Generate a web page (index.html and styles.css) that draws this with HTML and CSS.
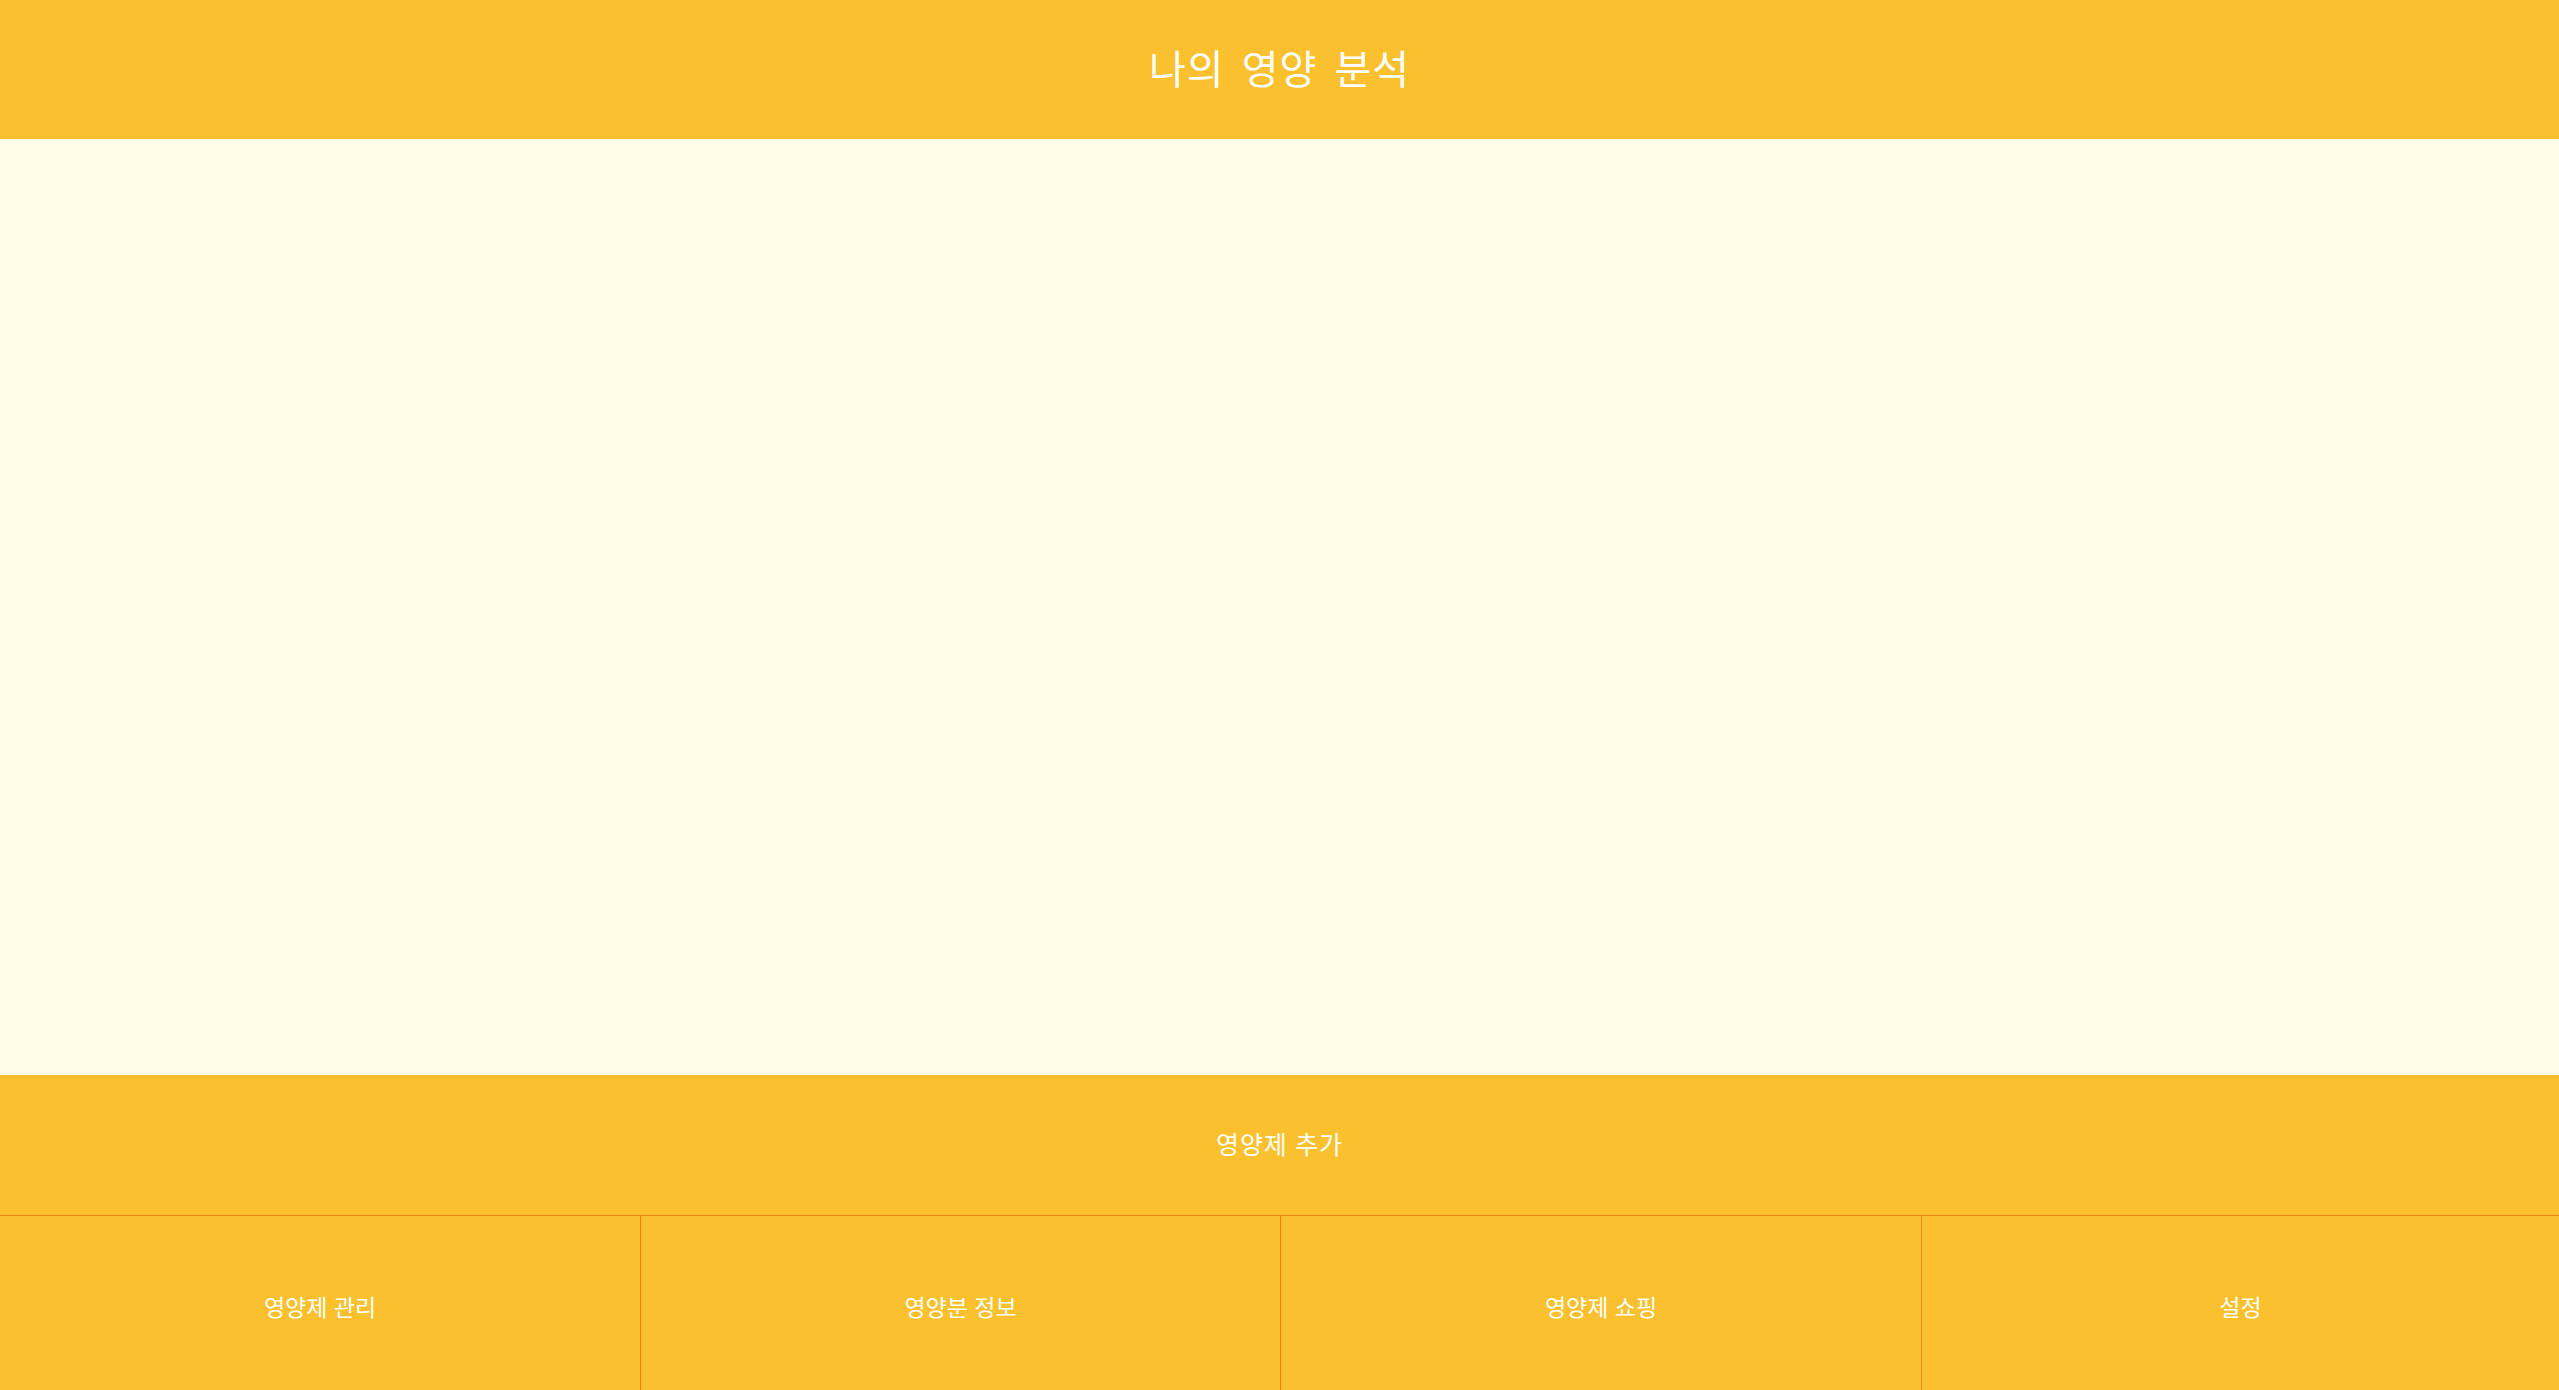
FILE: index.html
```html
<!DOCTYPE html>
<html lang="ko">
<head>
<meta charset="utf-8">
<title>나의 영양 분석</title>
<link rel="stylesheet" href="styles.css">
</head>
<body>
<div class="app">
  <header class="topbar"><h1 class="title">나의 영양 분석</h1></header>
  <main class="content"></main>
  <button class="add-btn" type="button">영양제 추가</button>
  <nav class="tabbar">
    <a class="tab">영양제 관리</a>
    <a class="tab">영양분 정보</a>
    <a class="tab">영양제 쇼핑</a>
    <a class="tab">설정</a>
  </nav>
</div>
</body>
</html>
```
FILE: styles.css
```css
html, body {
  margin: 0;
  padding: 0;
  height: 100%;
  overflow: hidden;
}
body {
  font-family: "Noto Sans CJK KR", "Noto Sans", sans-serif;
  color: #fff;
}
.app {
  display: flex;
  flex-direction: column;
  height: 100vh;
}
.topbar {
  height: 139px;
  flex: 0 0 139px;
  box-sizing: border-box;
  padding-bottom: 6px;
  background: #fbc02d;
  display: flex;
  align-items: center;
  justify-content: center;
}
.title {
  margin: 0;
  font-size: 40px;
  font-weight: 400;
  letter-spacing: 1px;
  word-spacing: 5px;
}
.content {
  flex: 1 1 auto;
  background: #fffde7;
}
.add-btn {
  flex: 0 0 140px;
  height: 140px;
  box-sizing: border-box;
  border: 0;
  margin: 0;
  padding: 0 0 5px 0;
  background: #fbc02d;
  color: #fff;
  font-family: inherit;
  font-size: 25px;
  letter-spacing: 0.8px;
  display: flex;
  align-items: center;
  justify-content: center;
}
.tabbar {
  flex: 0 0 175px;
  display: grid;
  grid-template-columns: 640px 640px 641px 1fr;
  border-top: 1px solid #f57f17;
  background: #fbc02d;
  box-sizing: border-box;
}
.tab {
  display: flex;
  align-items: center;
  justify-content: center;
  padding-top: 6px;
  font-size: 23px;
  color: #fff;
  border-left: 1px solid #f57f17;
}
.tab:first-child {
  border-left: 0;
}
```
